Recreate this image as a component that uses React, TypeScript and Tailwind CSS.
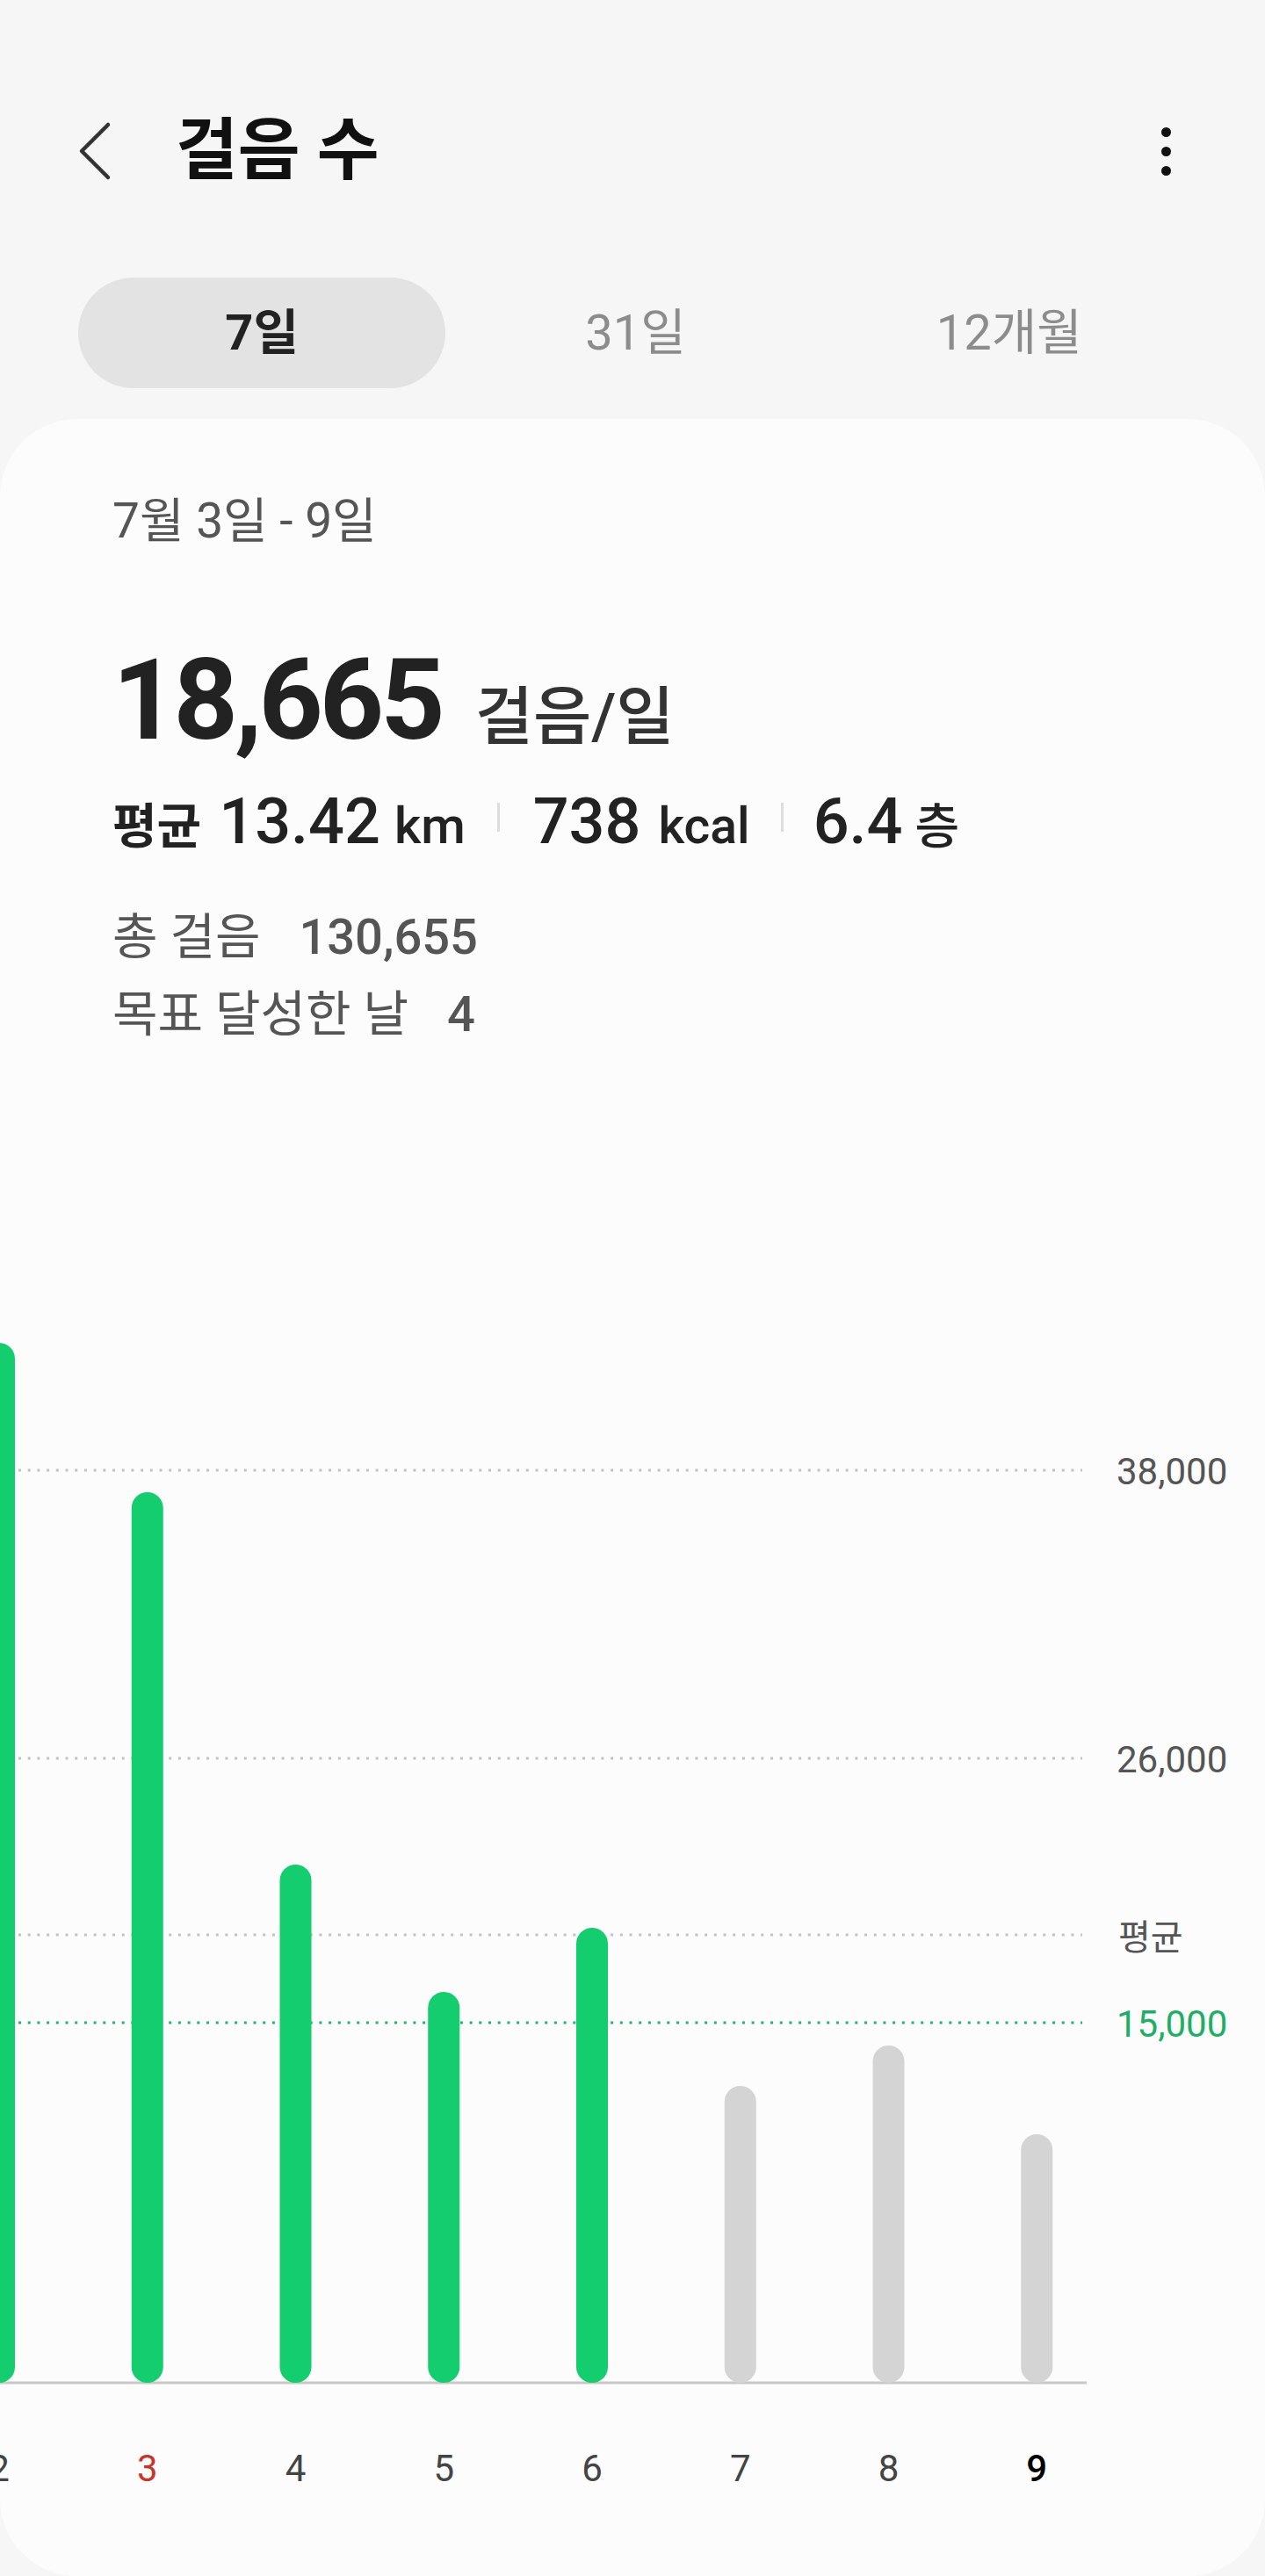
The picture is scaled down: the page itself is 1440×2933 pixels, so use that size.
import React from "react";

const FONT = { fontFamily: '"Roboto", "Noto Sans CJK KR", sans-serif' };

const TOP = 1500; // chart svg top in page coords
const BASE = 2713;
const centers = [-1, 167.75, 336.5, 505.25, 674, 842.75, 1011.5, 1180.25];
const tops = [1529, 1699, 2123, 2268, 2195, 2375, 2329, 2430];
const green = [true, true, true, true, true, false, false, false];
const days = ["2", "3", "4", "5", "6", "7", "8", "9"];

function Chart() {
  const grid = [
    { y: 1674, label: "38,000", color: "#c2c2c2", text: "#555555" },
    { y: 2002, label: "26,000", color: "#c2c2c2", text: "#555555" },
    { y: 2203, label: "평균", color: "#c2c2c2", text: "#555555", kr: true },
    { y: 2303, label: "15,000", color: "#26b36c", text: "#1fae66" },
  ];
  return (
    <svg width={1440} height={1370} viewBox="0 0 1440 1370" className="block" style={FONT}>
      {grid.map((g) => (
        <g key={g.label}>
          <line
            x1={21}
            x2={1232}
            y1={g.y - TOP}
            y2={g.y - TOP}
            stroke={g.color}
            strokeWidth={3}
            strokeDasharray="3 7.7"
          />
          <text
            x={g.kr ? 1273 : 1271}
            y={g.kr ? g.y - TOP + 17 : g.y - TOP + 16}
            fontSize={g.kr ? 40 : 42}
            fill={g.text}
            fontFamily={g.kr ? '"Noto Sans CJK KR", sans-serif' : '"Roboto", sans-serif'}
          >
            {g.label}
          </text>
        </g>
      ))}
      <line x1={0} x2={1237} y1={BASE - TOP} y2={BASE - TOP} stroke="#c8c8c8" strokeWidth={3} />
      {centers.map((c, i) => (
        <rect
          key={i}
          x={c - 18}
          y={tops[i] - TOP}
          width={36}
          height={BASE - tops[i]}
          rx={18}
          fill={green[i] ? "#13cd6f" : "#d4d4d4"}
        />
      ))}
      {centers.map((c, i) => (
        <text
          key={"d" + i}
          x={c}
          y={2825 - TOP}
          textAnchor="middle"
          fontSize={42}
          fontWeight={i === 7 ? 500 : 400}
          fill={i === 1 ? "#c4372d" : i === 7 ? "#000000" : "#444444"}
        >
          {days[i]}
        </text>
      ))}
    </svg>
  );
}

export default function App() {
  return (
    <div className="w-[1440px] min-h-[2933px] bg-[#f6f6f6] flex flex-col" style={FONT}>
      {/* Header */}
      <div className="mt-[102px] h-[140px] flex items-center pl-[86px] pr-[107px]">
        <svg width="44" height="70" viewBox="0 0 44 70" className="shrink-0">
          <polyline
            points="37,5 7,35 37,65"
            fill="none"
            stroke="#333333"
            strokeWidth="4.5"
            strokeLinecap="round"
            strokeLinejoin="round"
          />
        </svg>
        <div className="ml-[70px] text-[77px] leading-none font-bold text-[#111111]">걸음 수</div>
        <div className="ml-auto flex flex-col items-center gap-[11px]">
          <span className="w-[11px] h-[11px] rounded-full bg-[#111111]" />
          <span className="w-[11px] h-[11px] rounded-full bg-[#111111]" />
          <span className="w-[11px] h-[11px] rounded-full bg-[#111111]" />
        </div>
      </div>

      {/* Tabs */}
      <div className="mt-[74px] h-[126px] grid grid-cols-3 gap-[7px] pl-[89px] pr-[82px]">
        <div className="rounded-full bg-[#e3e3e3] flex items-center justify-center text-[56px] leading-none font-bold text-[#222222]">
          7일
        </div>
        <div className="flex items-center justify-center text-[56px] leading-none text-[#8c8c8c]">31일</div>
        <div className="flex items-center justify-center text-[56px] leading-none text-[#8c8c8c]">12개월</div>
      </div>

      {/* Card */}
      <div className="mt-[35px] flex-1 bg-[#fcfcfc] rounded-[88px] flex flex-col">
        <div className="pl-[128px]">
          <div className="mt-[86px] text-[55px] leading-[60px] text-[#555555]">7월 3일 - 9일</div>

          <div className="mt-[110px] flex items-baseline">
            <span className="text-[128px] leading-[128px] font-bold text-[#222222] tracking-[-4px]">18,665</span>
            <span className="ml-[38px] text-[72px] leading-[72px] font-medium text-[#333333]">걸음/일</span>
          </div>

          <div className="mt-[35px] text-[72px] leading-[80px] font-medium text-[#222222] whitespace-nowrap">
            <span className="text-[55px] leading-none font-bold">평균</span>
            <span className="ml-[20px]">13.42</span>
            <span className="ml-[16px] text-[58px] leading-none">km</span>
            <span className="ml-[36px] mr-[38px] inline-block w-[3px] h-[33px] bg-[#dddddd] align-[13px]" />
            <span>738</span>
            <span className="ml-[20px] text-[57px] leading-none">kcal</span>
            <span className="ml-[35px] mr-[34px] inline-block w-[3px] h-[33px] bg-[#dddddd] align-[13px]" />
            <span>6.4</span>
            <span className="ml-[14px] text-[55px] leading-none">층</span>
          </div>

          <div className="mt-[47px] text-[56px] leading-[88px] text-[#555555] whitespace-nowrap">
            <span>총 걸음</span>
            <span className="ml-[44px] font-medium">130,655</span>
          </div>
          <div className="text-[56px] leading-[88px] text-[#555555] whitespace-nowrap">
            <span>목표 달성한 날</span>
            <span className="ml-[44px] font-medium">4</span>
          </div>
        </div>

        <div className="mt-[301px]">
          <Chart />
        </div>
      </div>
    </div>
  );
}
